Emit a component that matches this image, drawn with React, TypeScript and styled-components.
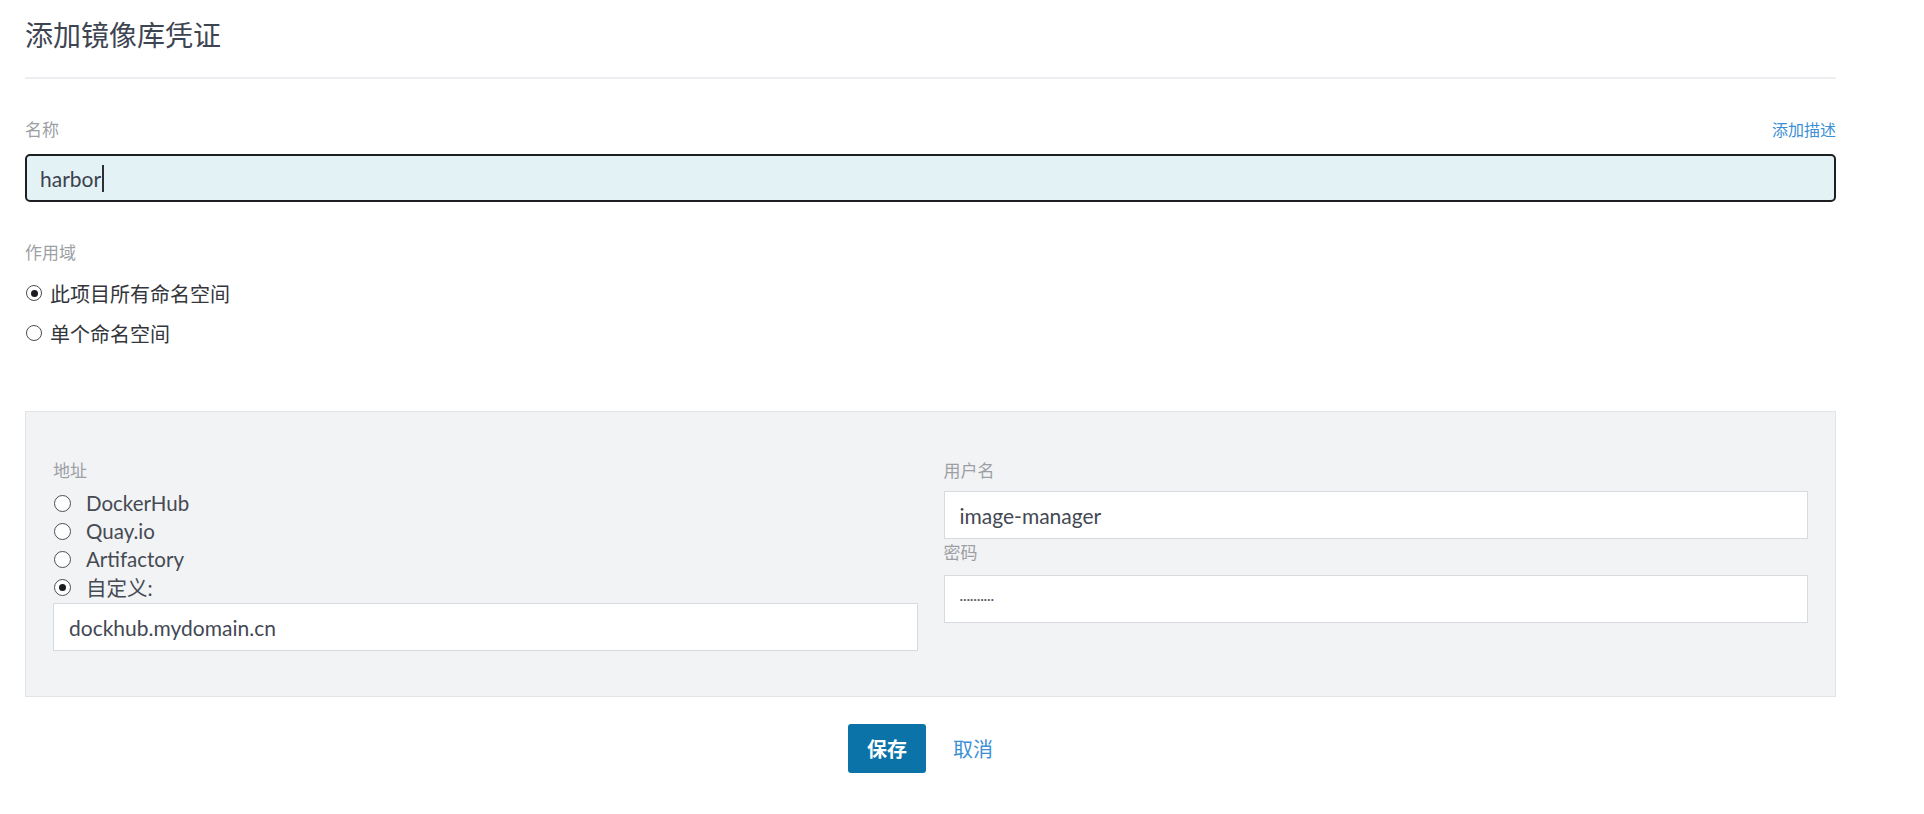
import React from "react";
import styled, { createGlobalStyle } from "styled-components";

const GlobalStyle = createGlobalStyle`
  html, body {
    margin: 0;
    padding: 0;
    background: #ffffff;
  }
  body {
    font-family: Lato, "Noto Sans CJK SC", "Noto Sans", sans-serif;
    color: #3a3f48;
  }
  * { box-sizing: border-box; }
`;

const Page = styled.div`
  width: 1836px;
  padding: 15px 0 0 25px;
`;

const Title = styled.h1`
  margin: 0;
  font-size: 28px;
  line-height: 40px;
  font-weight: 400;
  color: #3e4552;
`;

const Divider = styled.div`
  height: 2px;
  margin-top: 22px;
  background: #eceef1;
`;

const FieldHeader = styled.div<{ $mt: number }>`
  display: flex;
  justify-content: space-between;
  align-items: center;
  height: 24px;
  margin-top: ${(p) => p.$mt}px;
`;

const Label = styled.div<{ $mt?: number; $mb?: number }>`
  font-size: 17px;
  line-height: 24px;
  color: #9c9fa4;
  margin-top: ${(p) => p.$mt ?? 0}px;
  margin-bottom: ${(p) => p.$mb ?? 0}px;
`;

const LinkText = styled.a`
  font-size: 16px;
  line-height: 24px;
  color: #3b8fd5;
  text-decoration: none;
  cursor: pointer;
`;

const NameInput = styled.div`
  margin-top: 12px;
  height: 48px;
  border: 2px solid #1e1f22;
  border-radius: 5px;
  background: #e3f3f5;
  padding-left: 13px;
  display: flex;
  align-items: center;
  font-size: 21px;
  color: #3c4250;
`;

const Caret = styled.span`
  display: inline-block;
  width: 1.5px;
  height: 27px;
  margin-left: 1px;
  background: #2b2f36;
`;

const RadioList = styled.div<{ $mt: number }>`
  display: flex;
  flex-direction: column;
  margin-top: ${(p) => p.$mt}px;
`;

const RadioRow = styled.label<{ $h: number; $gap: number; $fs: number; $color: string }>`
  display: flex;
  align-items: center;
  height: ${(p) => p.$h}px;
  gap: ${(p) => p.$gap}px;
  font-size: ${(p) => p.$fs}px;
  color: ${(p) => p.$color};
  cursor: pointer;
`;

const RadioCircle = styled.span<{ $checked: boolean; $size: number }>`
  flex: none;
  width: ${(p) => p.$size}px;
  height: ${(p) => p.$size}px;
  border-radius: 50%;
  border: 1.6px solid #4b4e54;
  background: #ffffff;
  display: flex;
  align-items: center;
  justify-content: center;
  margin-left: 1px;
  &::after {
    content: "";
    display: ${(p) => (p.$checked ? "block" : "none")};
    width: 7px;
    height: 7px;
    border-radius: 50%;
    background: #1b1c1f;
  }
`;

const Panel = styled.div`
  margin-top: 58px;
  background: #f2f3f5;
  border: 1px solid #e2e4e8;
  padding: 47px 27px 45px 27px;
  display: grid;
  grid-template-columns: 1fr 1fr;
  column-gap: 26px;
`;

const Column = styled.div`
  display: flex;
  flex-direction: column;
`;

const TextField = styled.div<{ $mt?: number }>`
  height: 48px;
  margin-top: ${(p) => p.$mt ?? 0}px;
  background: #ffffff;
  border: 1px solid #d7dadf;
  padding-left: 15px;
  display: flex;
  align-items: center;
  font-size: 21px;
  color: #434854;
`;

const PasswordDots = styled.span`
  font-size: 14px;
  letter-spacing: -0.2px;
  color: #5a5e66;
  padding-bottom: 2px;
`;

const Actions = styled.div`
  display: flex;
  justify-content: center;
  align-items: center;
  gap: 7px;
  margin-top: 27px;
`;

const PrimaryButton = styled.button`
  height: 49px;
  padding: 0 19px;
  border: none;
  border-radius: 3px;
  background: #0b73a8;
  color: #ffffff;
  font-family: inherit;
  font-size: 20px;
  font-weight: 600;
  cursor: pointer;
`;

const LinkButton = styled.button`
  height: 49px;
  padding: 0 20px;
  border: none;
  background: transparent;
  color: #3b8fd5;
  font-family: inherit;
  font-size: 20px;
  cursor: pointer;
`;

type RadioProps = {
  checked?: boolean;
  children: React.ReactNode;
  variant: "top" | "panel";
};

const Radio = ({ checked = false, children, variant }: RadioProps) =>
  variant === "top" ? (
    <RadioRow $h={40} $gap={8} $fs={20} $color="#33363b">
      <RadioCircle $checked={checked} $size={16} />
      <span>{children}</span>
    </RadioRow>
  ) : (
    <RadioRow $h={28} $gap={15} $fs={20.5} $color="#454a53">
      <RadioCircle $checked={checked} $size={17} />
      <span>{children}</span>
    </RadioRow>
  );

export default function App() {
  return (
    <>
      <GlobalStyle />
      <Page>
        <Title>添加镜像库凭证</Title>
        <Divider />

        <FieldHeader $mt={39}>
          <Label>名称</Label>
          <LinkText>添加描述</LinkText>
        </FieldHeader>
        <NameInput>
          harbor
          <Caret />
        </NameInput>

        <Label $mt={39}>作用域</Label>
        <RadioList $mt={8}>
          <Radio variant="top" checked>
            此项目所有命名空间
          </Radio>
          <Radio variant="top">单个命名空间</Radio>
        </RadioList>

        <Panel>
          <Column>
            <Label>地址</Label>
            <RadioList $mt={6}>
              <Radio variant="panel">DockerHub</Radio>
              <Radio variant="panel">Quay.io</Radio>
              <Radio variant="panel">Artifactory</Radio>
              <Radio variant="panel" checked>
                自定义:
              </Radio>
            </RadioList>
            <TextField $mt={2}>dockhub.mydomain.cn</TextField>
          </Column>
          <Column>
            <Label $mb={8}>用户名</Label>
            <TextField>image-manager</TextField>
            <Label $mt={2} $mb={10}>
              密码
            </Label>
            <TextField>
              <PasswordDots>··········</PasswordDots>
            </TextField>
          </Column>
        </Panel>

        <Actions>
          <PrimaryButton>保存</PrimaryButton>
          <LinkButton>取消</LinkButton>
        </Actions>
      </Page>
    </>
  );
}
